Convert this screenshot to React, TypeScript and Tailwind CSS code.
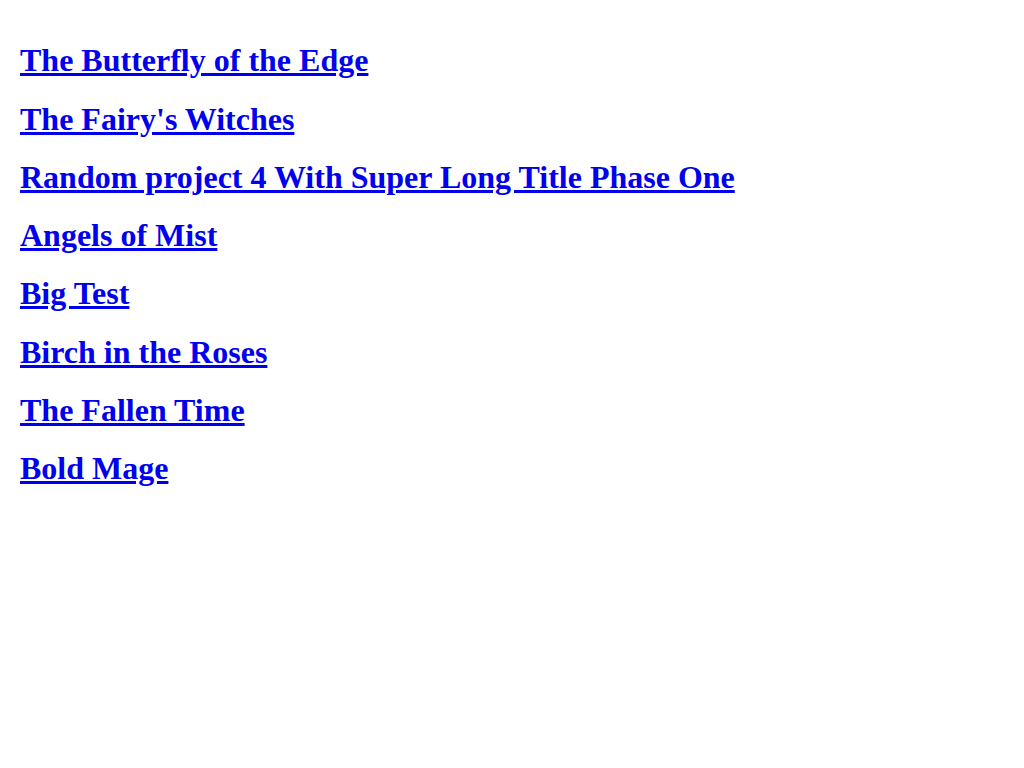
const projects = [
  "The Butterfly of the Edge",
  "The Fairy's Witches",
  "Random project 4 With Super Long Title Phase One",
  "Angels of Mist",
  "Big Test",
  "Birch in the Roses",
  "The Fallen Time",
  "Bold Mage",
];

export default function App() {
  return (
    <div className="min-h-screen bg-white px-5 pt-[21px] font-['Liberation_Serif',serif] text-black">
      {projects.map((title) => (
        <h1 key={title} className="my-[0.67em] text-[32px] font-bold leading-[1.15]">
          <a href="#" className="text-[#0000ee] underline">
            {title}
          </a>
        </h1>
      ))}
    </div>
  );
}
